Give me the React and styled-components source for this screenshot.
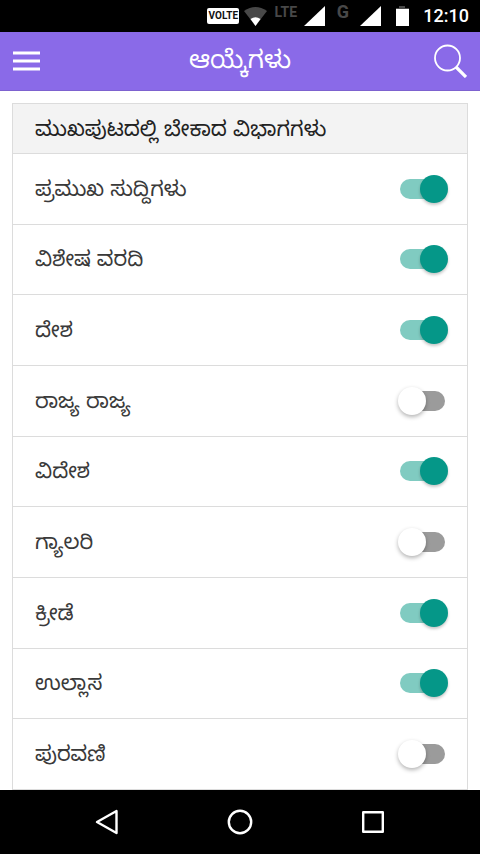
import React, { useState } from 'react';
import styled, { createGlobalStyle } from 'styled-components';

const GlobalStyle = createGlobalStyle`
  *, *::before, *::after { box-sizing: border-box; }
  body {
    margin: 0;
    background: #fff;
    font-family: "Noto Sans Kannada", "Noto Sans", sans-serif;
  }
`;

const Screen = styled.div`
  display: flex;
  flex-direction: column;
  min-height: 100vh;
`;

const StatusBar = styled.div`
  display: flex;
  align-items: center;
  justify-content: flex-end;
  height: 32px;
  padding-right: 11px;
  background: #000;
  color: #fff;
  font-family: Roboto, sans-serif;
`;

const VolteBadge = styled.span`
  width: 32px;
  margin-right: 5px;
  border-radius: 2px;
  background: #fff;
  color: #111;
  font-size: 10px;
  font-weight: 700;
  line-height: 16px;
  text-align: center;
`;

const NetworkLabel = styled.span`
  width: ${(p) => p.$width}px;
  padding-bottom: 8px;
  color: #484848;
  font-size: ${(p) => p.$size}px;
  font-weight: 700;
  line-height: 16px;
  text-align: center;
`;

const StatusIcon = styled.svg`
  display: block;
  flex: none;
`;

const Clock = styled.time`
  margin-left: 14px;
  font-size: 18px;
  font-weight: 500;
  line-height: 32px;
`;

const AppBar = styled.header`
  display: grid;
  grid-template-columns: 60px 1fr 60px;
  align-items: center;
  height: 59px;
  background: #8a6ae8;
  border-bottom: 1px solid #7d62cf;
  color: #fff;
`;

const Title = styled.h1`
  margin: 0;
  padding-top: 8px;
  font-size: 25px;
  font-weight: 400;
  line-height: 32px;
  text-align: center;
`;

const IconButton = styled.button`
  display: flex;
  align-items: center;
  justify-content: ${(p) => (p.$end ? 'flex-end' : 'flex-start')};
  height: 56px;
  padding: 0 13px;
  border: 0;
  background: none;
  color: inherit;
  cursor: pointer;
`;

const Main = styled.main`
  display: flex;
  flex: 1;
  flex-direction: column;
  padding: 12px 12px 0;
`;

const Card = styled.section`
  display: flex;
  flex: 1;
  flex-direction: column;
  border: 1px solid #dcdcdc;
  border-bottom: 0;
`;

const CardTitle = styled.h2`
  margin: 0;
  padding: 13px 22px 4px;
  border-bottom: 1px solid #dcdcdc;
  background: #f3f3f3;
  color: #222;
  font-size: 21px;
  font-weight: 400;
  line-height: 32px;
`;

const List = styled.ul`
  display: grid;
  flex: 1;
  grid-auto-rows: 1fr;
  margin: 0;
  padding: 0;
  list-style: none;
`;

const Item = styled.li`
  display: flex;
  border-bottom: 1px solid #dcdcdc;
`;

const Row = styled.label`
  display: flex;
  flex: 1;
  align-items: center;
  justify-content: space-between;
  min-height: 48px;
  padding: 0 19px 0 22px;
  cursor: pointer;
`;

const SectionName = styled.span`
  padding-top: 8px;
  color: #3a3a3a;
  font-size: 21px;
  line-height: 32px;
`;

const Switch = styled.input.attrs({ type: 'checkbox', role: 'switch' })`
  appearance: none;
  display: flex;
  align-items: center;
  position: relative;
  width: 50px;
  height: 28px;
  margin: 0;
  cursor: pointer;

  &::before {
    content: '';
    flex: 1;
    height: 20px;
    margin: 0 3px 0 2px;
    border-radius: 10px;
    background: #9b9b9b;
  }

  &::after {
    content: '';
    position: absolute;
    left: 0;
    width: 28px;
    height: 28px;
    border-radius: 50%;
    background: #fff;
    box-shadow: 0 2px 4px rgba(0, 0, 0, 0.3);
  }

  &:checked::before { background: #80cbc1; }
  &:checked::after {
    left: 22px;
    background: #059788;
    box-shadow: 0 2px 3px rgba(0, 0, 0, 0.22);
  }
`;

const NavBar = styled.nav`
  display: flex;
  align-items: center;
  justify-content: center;
  gap: 85px;
  height: 64px;
  background: #000;
`;

const NavButton = styled.button`
  display: flex;
  align-items: center;
  justify-content: center;
  width: 48px;
  height: 48px;
  padding: 0;
  border: 0;
  background: none;
  color: #fff;
  cursor: pointer;
`;

const SECTIONS = [
  { name: 'ಪ್ರಮುಖ ಸುದ್ದಿಗಳು', on: true },
  { name: 'ವಿಶೇಷ ವರದಿ', on: true },
  { name: 'ದೇಶ', on: true },
  { name: 'ರಾಜ್ಯ ರಾಜ್ಯ', on: false },
  { name: 'ವಿದೇಶ', on: true },
  { name: 'ಗ್ಯಾಲರಿ', on: false },
  { name: 'ಕ್ರೀಡೆ', on: true },
  { name: 'ಉಲ್ಲಾಸ', on: true },
  { name: 'ಪುರವಣಿ', on: false },
];

function Signal() {
  return (
    <StatusIcon width="21" height="20" viewBox="0 0 21 20" aria-hidden="true">
      <path d="M21 0v20H0z" fill="#fff" />
    </StatusIcon>
  );
}

function SectionRow({ name, on }) {
  const [checked, setChecked] = useState(on);
  return (
    <Item>
      <Row>
        <SectionName>{name}</SectionName>
        <Switch checked={checked} onChange={(e) => setChecked(e.target.checked)} />
      </Row>
    </Item>
  );
}

export default function App() {
  return (
    <Screen>
      <GlobalStyle />
      <StatusBar>
        <VolteBadge>VOLTE</VolteBadge>
        <StatusIcon width="23" height="19" viewBox="0 0 23 19" aria-hidden="true">
          <path d="M0 4Q11.5-4 23 4L11.5 19z" fill="#484848" />
          <path d="M6.5 12q5-3.5 10 0l-5 7z" fill="#fff" />
        </StatusIcon>
        <NetworkLabel $width={37} $size={14}>LTE</NetworkLabel>
        <Signal />
        <NetworkLabel $width={35} $size={18}>G</NetworkLabel>
        <Signal />
        <StatusIcon width="28" height="20" viewBox="0 0 28 20" aria-hidden="true">
          <path d="M18 0h6v2h4v2H15V2h3z" fill="#484848" />
          <path d="M15 3h13v17H15z" fill="#fff" />
        </StatusIcon>
        <Clock>12:10</Clock>
      </StatusBar>

      <AppBar>
        <IconButton aria-label="Menu">
          <svg width="27" height="20" viewBox="0 0 27 20" fill="currentColor" aria-hidden="true">
            <path d="M0 0.5h27v3H0zM0 8.5h27v3H0zM0 16.5h27v3H0z" />
          </svg>
        </IconButton>
        <Title>ಆಯ್ಕೆಗಳು</Title>
        <IconButton aria-label="Search" $end>
          <svg width="33" height="34" viewBox="0 0 33 34" fill="none" stroke="currentColor" aria-hidden="true">
            <circle cx="13.5" cy="14" r="12.5" strokeWidth="1.8" />
            <path d="M22 23l10 10" strokeWidth="3.2" />
          </svg>
        </IconButton>
      </AppBar>

      <Main>
        <Card>
          <CardTitle>ಮುಖಪುಟದಲ್ಲಿ ಬೇಕಾದ ವಿಭಾಗಗಳು</CardTitle>
          <List>
            {SECTIONS.map((s) => (
              <SectionRow key={s.name} {...s} />
            ))}
          </List>
        </Card>
      </Main>

      <NavBar>
        <NavButton aria-label="Back">
          <svg width="24" height="26" viewBox="0 0 24 26" fill="none" stroke="currentColor" strokeWidth="2.4" strokeLinejoin="round" aria-hidden="true">
            <path d="M21.5 2v22L2 13z" />
          </svg>
        </NavButton>
        <NavButton aria-label="Home">
          <svg width="26" height="26" viewBox="0 0 26 26" fill="none" stroke="currentColor" strokeWidth="2.4" aria-hidden="true">
            <circle cx="13" cy="13" r="11.2" />
          </svg>
        </NavButton>
        <NavButton aria-label="Recent apps">
          <svg width="22" height="22" viewBox="0 0 22 22" fill="none" stroke="currentColor" strokeWidth="2.4" strokeLinejoin="round" aria-hidden="true">
            <rect x="1.2" y="1.2" width="19.6" height="19.6" />
          </svg>
        </NavButton>
      </NavBar>
    </Screen>
  );
}
